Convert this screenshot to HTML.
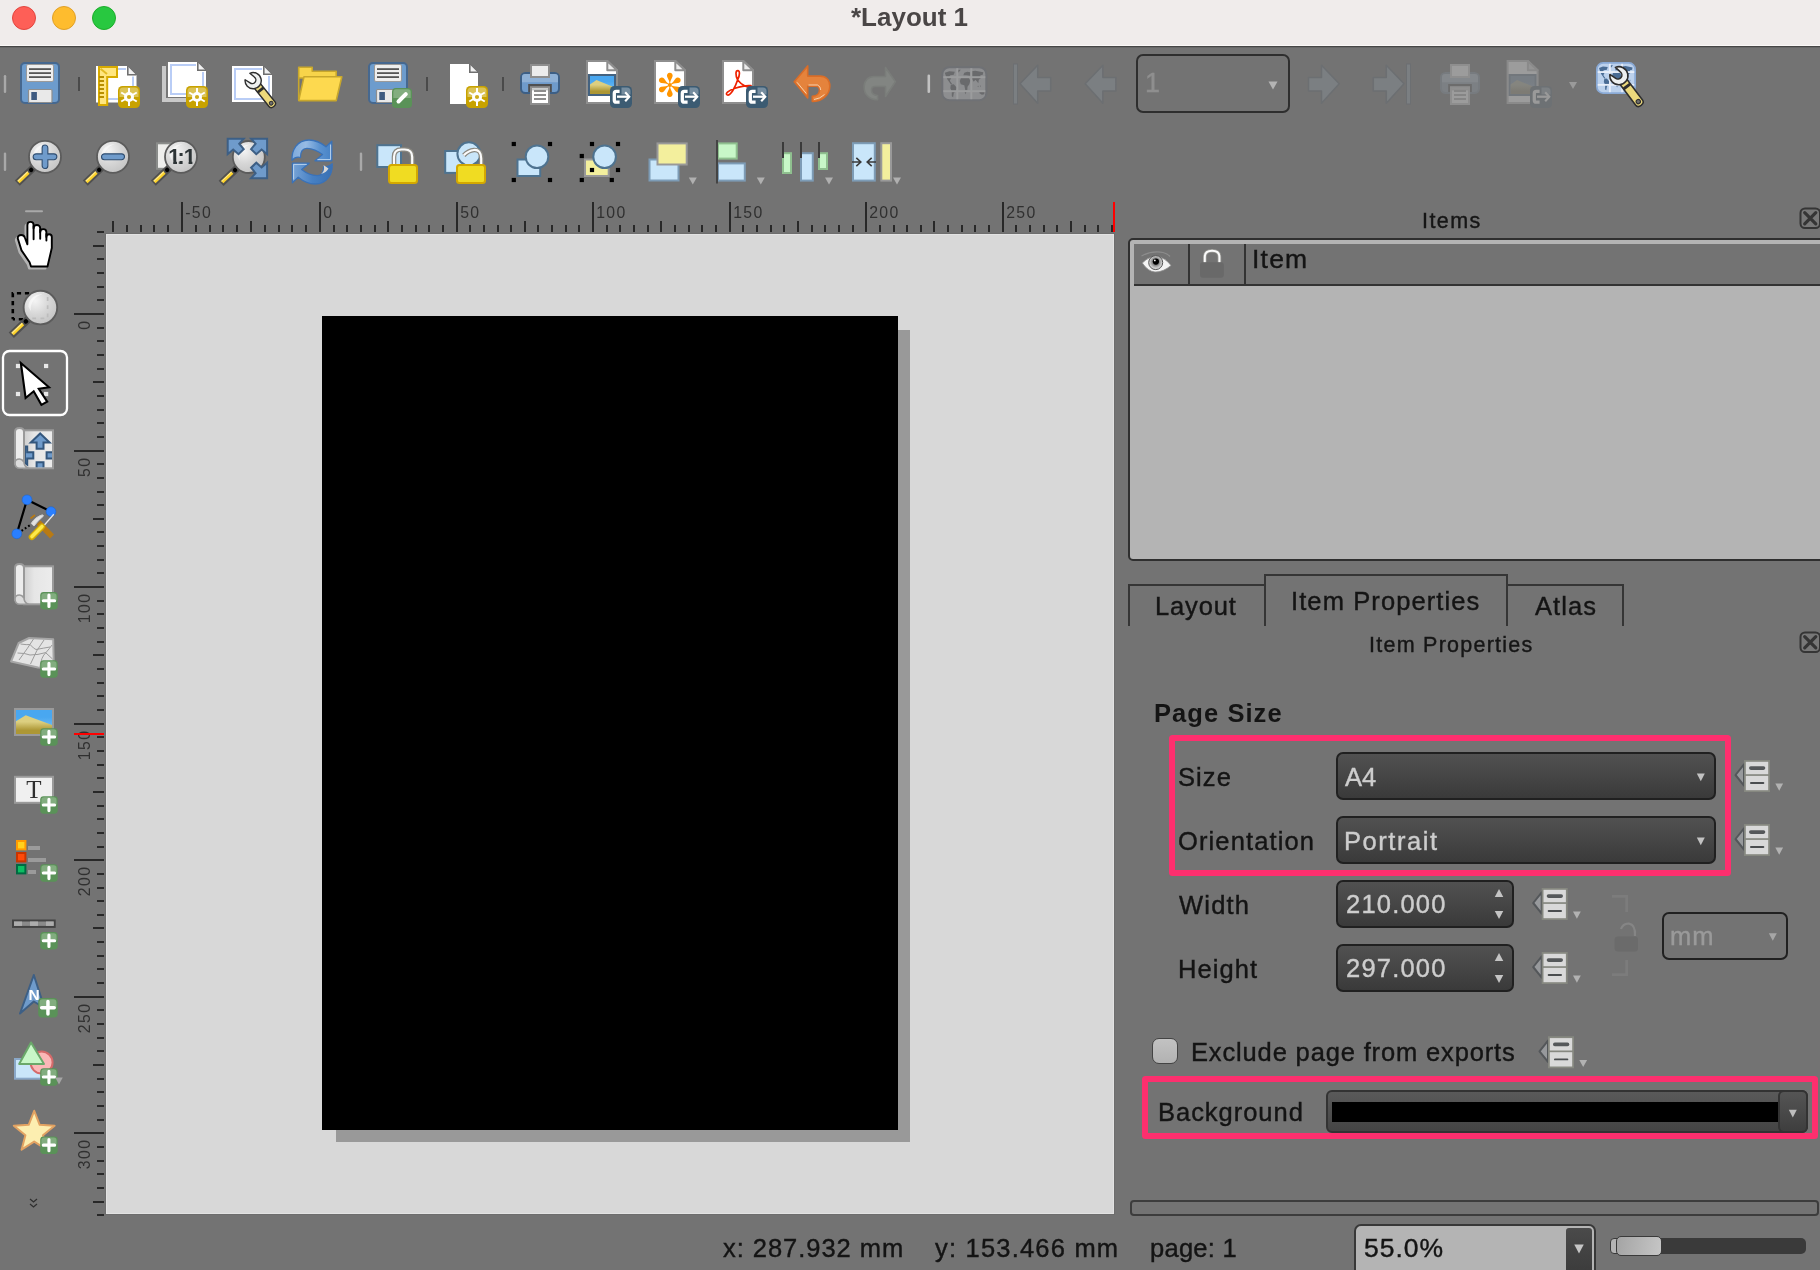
<!DOCTYPE html><html><head><meta charset="utf-8"><title>*Layout 1</title><style>
*{box-sizing:border-box;margin:0;padding:0}
html,body{width:1820px;height:1270px;overflow:hidden;background:#737373;font-family:"Liberation Sans",sans-serif;color:#1a1a1a}
.a{position:absolute}
.t{position:absolute;white-space:nowrap;line-height:1;will-change:transform;-webkit-text-stroke:.4px currentColor}
#title,#pgsize{-webkit-text-stroke:0}
.combo{position:absolute;border:2px solid #202020;border-radius:7px;background:linear-gradient(#515151,#3a3a3a)}
.lbl{font-size:25.5px;color:#141414}
.val{font-size:25.5px;color:#cdcdcd}
.tab{position:absolute;border:2px solid #353535;border-bottom:none;background:#737373}
.pink{position:absolute;border:6px solid #fd2f6e;border-radius:3.5px}
#ico{position:absolute;left:0;top:0;will-change:transform}

#items{letter-spacing:1.45px;margin-left:-2px}
#item{letter-spacing:1.2px;margin-left:-1px}
#tab1{letter-spacing:.84px;margin-left:-2px}
#tab2{letter-spacing:1.1px;margin-left:-2px}
#tab3{letter-spacing:1.1px}
#iptitle{letter-spacing:1.25px;margin-left:-2px}
#pgsize{letter-spacing:1.07px}
#lsize{letter-spacing:1.07px;margin-left:-1px}
#lori{letter-spacing:1.12px;margin-left:-1px}
#lwid{letter-spacing:1.2px}
#lhei{letter-spacing:1.06px;margin-left:-1px}
#vpor{letter-spacing:1.54px;margin-left:-1.5px}
#vw,#vh{letter-spacing:1.2px;margin-left:-1px}
#lexc{letter-spacing:.85px;margin-left:-.6px}
#lbg{letter-spacing:.97px}
#sx{letter-spacing:.96px;margin-left:1px}
#sy{letter-spacing:1.2px;margin-left:1.4px}
#sp{letter-spacing:.27px}
#szoom{letter-spacing:1px;margin-left:-1px}
#vmm{letter-spacing:1px}
#atl1{margin-left:-3px}
</style></head><body>
<div class="a" style="left:0;top:0;width:1820px;height:45px;background:#f0eceb"></div>
<div class="a" style="left:0;top:45px;width:1820px;height:1px;background:#fbf8f7"></div>
<div class="a" style="left:0;top:46px;width:1820px;height:1px;background:#464646"></div>
<div class="a" style="left:0;top:47px;width:1820px;height:1px;background:#676767"></div>
<div class="a" style="left:12px;top:6px;width:24px;height:24px;border-radius:50%;background:#fe5f57;border:1px solid #e2463f"></div>
<div class="a" style="left:52px;top:6px;width:24px;height:24px;border-radius:50%;background:#febc2e;border:1px solid #e0a028"></div>
<div class="a" style="left:92px;top:6px;width:24px;height:24px;border-radius:50%;background:#28c840;border:1px solid #1dad2b"></div>
<div class="t" id="title" style="left:851px;top:3.6px;font-size:26px;font-weight:bold;color:#4a4646">*Layout 1</div>
<div class="a" style="left:106px;top:234px;width:1008px;height:980px;background:#d8d8d8;border:1px solid #e2e2e2;box-shadow:0 0 0 1px #6d6d6d"></div>
<div class="a" style="left:336px;top:330px;width:574px;height:812px;background:#999"></div>
<div class="a" style="left:322px;top:316px;width:576px;height:814px;background:#000"></div>
<div class="a" style="left:1136px;top:54px;width:154px;height:59px;border:2px solid #2e2e2e;border-radius:7px"></div>
<div class="t" id="atl1" style="left:1148px;top:70px;font-size:27px;color:#8f8f8f">1</div>
<div class="t" id="items" style="left:1424px;top:211px;font-size:21.5px;color:#161616">Items</div>
<div class="a" style="left:1128px;top:238px;width:700px;height:323px;border:2px solid #2f2f2f;border-radius:5px;background:#b4b4b4"></div>
<div class="a" style="left:1134px;top:244px;width:690px;height:40px;background:#737373"></div>
<div class="a" style="left:1134px;top:284px;width:690px;height:2px;background:#333"></div>
<div class="a" style="left:1188px;top:244px;width:2px;height:41px;background:#333"></div>
<div class="a" style="left:1244px;top:244px;width:2px;height:41px;background:#333"></div>
<div class="t" id="item" style="left:1253px;top:246px;font-size:26.5px;color:#141414">Item</div>
<div class="tab" style="left:1128px;top:584px;width:138px;height:42px"></div>
<div class="tab" style="left:1506px;top:584px;width:118px;height:42px"></div>
<div class="tab" style="left:1264px;top:574px;width:244px;height:52px"></div>
<div class="t" id="tab1" style="left:1157px;top:594px;font-size:25.5px;color:#141414">Layout</div>
<div class="t" id="tab2" style="left:1293px;top:589px;font-size:25.5px;color:#141414">Item Properties</div>
<div class="t" id="tab3" style="left:1535px;top:594px;font-size:25.5px;color:#141414">Atlas</div>
<div class="t" id="iptitle" style="left:1371px;top:635px;font-size:21.5px;color:#161616">Item Properties</div>
<div class="t" id="pgsize" style="left:1154px;top:701px;font-size:25.5px;font-weight:bold;color:#141414">Page Size</div>
<div class="pink" style="left:1169px;top:735px;width:562px;height:141px"></div>
<div class="t lbl" id="lsize" style="left:1179px;top:765px">Size</div>
<div class="t lbl" id="lori" style="left:1179px;top:829px">Orientation</div>
<div class="t lbl" id="lwid" style="left:1179px;top:893px">Width</div>
<div class="t lbl" id="lhei" style="left:1179px;top:957px">Height</div>
<div class="combo" style="left:1336px;top:752px;width:380px;height:48px"></div>
<div class="combo" style="left:1336px;top:816px;width:380px;height:48px"></div>
<div class="combo" style="left:1336px;top:880px;width:178px;height:48px"></div>
<div class="combo" style="left:1336px;top:944px;width:178px;height:48px"></div>
<div class="t val" id="va4" style="left:1345px;top:765px">A4</div>
<div class="t val" id="vpor" style="left:1345px;top:829px">Portrait</div>
<div class="t val" id="vw" style="left:1347px;top:892px">210.000</div>
<div class="t val" id="vh" style="left:1347px;top:956px">297.000</div>
<div class="a" style="left:1662px;top:912px;width:126px;height:48px;border:2px solid #202020;border-radius:7px"></div>
<div class="t" id="vmm" style="left:1670px;top:924px;font-size:25.5px;color:#9a9a9a">mm</div>
<div class="a" style="left:1152px;top:1038px;width:26px;height:26px;border:1.5px solid #444;border-radius:7px;background:linear-gradient(#c2c2c2,#b2b2b2)"></div>
<div class="t lbl" id="lexc" style="left:1192px;top:1039.5px">Exclude page from exports</div>
<div class="pink" style="left:1142px;top:1076px;width:676px;height:63px"></div>
<div class="t lbl" id="lbg" style="left:1158px;top:1100px">Background</div>
<div class="a" style="left:1326px;top:1090px;width:482px;height:43px;border:2px solid #333;border-radius:6px;background:linear-gradient(#5a5a5a,#444)"></div>
<div class="a" style="left:1332px;top:1102px;width:446px;height:20px;background:#000"></div>
<div class="a" style="left:1778px;top:1090px;width:30px;height:43px;border:2px solid #333;border-radius:6px;background:linear-gradient(#555,#3e3e3e)"></div>
<div class="a" style="left:1130px;top:1200px;width:689px;height:16px;border:2px solid #3c3c3c;border-radius:4px"></div>
<div class="t" id="sx" style="left:722px;top:1236px;font-size:25.5px;color:#141414">x: 287.932 mm</div>
<div class="t" id="sy" style="left:934px;top:1236px;font-size:25.5px;color:#141414">y: 153.466 mm</div>
<div class="t" id="sp" style="left:1150px;top:1236px;font-size:25.5px;color:#141414">page: 1</div>
<div class="a" style="left:1354px;top:1224px;width:242px;height:60px;border:2px solid #383838;border-radius:7px;background:#b4b4b4"></div>
<div class="a" style="left:1566px;top:1228px;width:26px;height:50px;border-radius:3px 3px 0 0;background:linear-gradient(#4a4a4a,#3a3a3a)"></div>
<div class="t" id="szoom" style="left:1365px;top:1235px;font-size:26.5px;color:#141414">55.0%</div>
<div class="a" style="left:1611px;top:1238px;width:195px;height:16px;border-radius:5px;background:#3a3a3a"></div>
<div class="a" style="left:1610px;top:1238px;width:12px;height:16px;border:1.5px solid #3a3a3a;border-radius:4px;background:#b4b4b4"></div>
<div class="a" style="left:1616px;top:1236px;width:46px;height:20px;border:1.5px solid #3a3a3a;border-radius:5px;background:linear-gradient(100deg,#a4a4a4,#c6c6c6)"></div>
<svg id="ico" width="1820" height="1270" viewBox="0 0 1820 1270" font-family="Liberation Sans, sans-serif"><rect x="112" y="221" width="2" height="11" fill="#282828"/>
<rect x="126" y="225" width="2" height="7" fill="#282828"/>
<rect x="140" y="225" width="2" height="7" fill="#282828"/>
<rect x="153" y="225" width="2" height="7" fill="#282828"/>
<rect x="167" y="225" width="2" height="7" fill="#282828"/>
<rect x="181" y="202" width="2" height="30" fill="#282828"/>
<text x="185.2" y="217.8" font-size="15.8" letter-spacing="1.4" fill="#303030">-50</text>
<rect x="195" y="225" width="2" height="7" fill="#282828"/>
<rect x="209" y="225" width="2" height="7" fill="#282828"/>
<rect x="222" y="225" width="2" height="7" fill="#282828"/>
<rect x="236" y="225" width="2" height="7" fill="#282828"/>
<rect x="250" y="221" width="2" height="11" fill="#282828"/>
<rect x="264" y="225" width="2" height="7" fill="#282828"/>
<rect x="278" y="225" width="2" height="7" fill="#282828"/>
<rect x="291" y="225" width="2" height="7" fill="#282828"/>
<rect x="305" y="225" width="2" height="7" fill="#282828"/>
<rect x="319" y="202" width="2" height="30" fill="#282828"/>
<text x="323.2" y="217.8" font-size="15.8" letter-spacing="1.4" fill="#303030">0</text>
<rect x="333" y="225" width="2" height="7" fill="#282828"/>
<rect x="346" y="225" width="2" height="7" fill="#282828"/>
<rect x="360" y="225" width="2" height="7" fill="#282828"/>
<rect x="374" y="225" width="2" height="7" fill="#282828"/>
<rect x="387" y="221" width="2" height="11" fill="#282828"/>
<rect x="401" y="225" width="2" height="7" fill="#282828"/>
<rect x="415" y="225" width="2" height="7" fill="#282828"/>
<rect x="428" y="225" width="2" height="7" fill="#282828"/>
<rect x="442" y="225" width="2" height="7" fill="#282828"/>
<rect x="456" y="202" width="2" height="30" fill="#282828"/>
<text x="460.2" y="217.8" font-size="15.8" letter-spacing="1.4" fill="#303030">50</text>
<rect x="469" y="225" width="2" height="7" fill="#282828"/>
<rect x="483" y="225" width="2" height="7" fill="#282828"/>
<rect x="497" y="225" width="2" height="7" fill="#282828"/>
<rect x="510" y="225" width="2" height="7" fill="#282828"/>
<rect x="524" y="221" width="2" height="11" fill="#282828"/>
<rect x="537" y="225" width="2" height="7" fill="#282828"/>
<rect x="551" y="225" width="2" height="7" fill="#282828"/>
<rect x="565" y="225" width="2" height="7" fill="#282828"/>
<rect x="578" y="225" width="2" height="7" fill="#282828"/>
<rect x="592" y="202" width="2" height="30" fill="#282828"/>
<text x="596.2" y="217.8" font-size="15.8" letter-spacing="1.4" fill="#303030">100</text>
<rect x="606" y="225" width="2" height="7" fill="#282828"/>
<rect x="619" y="225" width="2" height="7" fill="#282828"/>
<rect x="633" y="225" width="2" height="7" fill="#282828"/>
<rect x="647" y="225" width="2" height="7" fill="#282828"/>
<rect x="660" y="221" width="2" height="11" fill="#282828"/>
<rect x="674" y="225" width="2" height="7" fill="#282828"/>
<rect x="688" y="225" width="2" height="7" fill="#282828"/>
<rect x="701" y="225" width="2" height="7" fill="#282828"/>
<rect x="715" y="225" width="2" height="7" fill="#282828"/>
<rect x="729" y="202" width="2" height="30" fill="#282828"/>
<text x="733.2" y="217.8" font-size="15.8" letter-spacing="1.4" fill="#303030">150</text>
<rect x="742" y="225" width="2" height="7" fill="#282828"/>
<rect x="756" y="225" width="2" height="7" fill="#282828"/>
<rect x="770" y="225" width="2" height="7" fill="#282828"/>
<rect x="783" y="225" width="2" height="7" fill="#282828"/>
<rect x="797" y="221" width="2" height="11" fill="#282828"/>
<rect x="811" y="225" width="2" height="7" fill="#282828"/>
<rect x="824" y="225" width="2" height="7" fill="#282828"/>
<rect x="838" y="225" width="2" height="7" fill="#282828"/>
<rect x="852" y="225" width="2" height="7" fill="#282828"/>
<rect x="865" y="202" width="2" height="30" fill="#282828"/>
<text x="869.2" y="217.8" font-size="15.8" letter-spacing="1.4" fill="#303030">200</text>
<rect x="879" y="225" width="2" height="7" fill="#282828"/>
<rect x="893" y="225" width="2" height="7" fill="#282828"/>
<rect x="906" y="225" width="2" height="7" fill="#282828"/>
<rect x="920" y="225" width="2" height="7" fill="#282828"/>
<rect x="933" y="221" width="2" height="11" fill="#282828"/>
<rect x="947" y="225" width="2" height="7" fill="#282828"/>
<rect x="961" y="225" width="2" height="7" fill="#282828"/>
<rect x="974" y="225" width="2" height="7" fill="#282828"/>
<rect x="988" y="225" width="2" height="7" fill="#282828"/>
<rect x="1002" y="202" width="2" height="30" fill="#282828"/>
<text x="1006.2" y="217.8" font-size="15.8" letter-spacing="1.4" fill="#303030">250</text>
<rect x="1015" y="225" width="2" height="7" fill="#282828"/>
<rect x="1029" y="225" width="2" height="7" fill="#282828"/>
<rect x="1043" y="225" width="2" height="7" fill="#282828"/>
<rect x="1056" y="225" width="2" height="7" fill="#282828"/>
<rect x="1070" y="221" width="2" height="11" fill="#282828"/>
<rect x="1084" y="225" width="2" height="7" fill="#282828"/>
<rect x="1097" y="225" width="2" height="7" fill="#282828"/>
<rect x="1111" y="225" width="2" height="7" fill="#282828"/>
<rect x="1113" y="202" width="2" height="30" fill="#f00"/>
<rect x="97" y="231" width="7" height="2" fill="#282828"/>
<rect x="93" y="245" width="11" height="2" fill="#282828"/>
<rect x="97" y="258" width="7" height="2" fill="#282828"/>
<rect x="97" y="272" width="7" height="2" fill="#282828"/>
<rect x="97" y="286" width="7" height="2" fill="#282828"/>
<rect x="97" y="299" width="7" height="2" fill="#282828"/>
<rect x="74" y="313" width="30" height="2" fill="#282828"/>
<text transform="translate(90.3,319.6) rotate(-90)" text-anchor="end" font-size="15.8" letter-spacing="1.4" fill="#303030">0</text>
<rect x="97" y="327" width="7" height="2" fill="#282828"/>
<rect x="97" y="340" width="7" height="2" fill="#282828"/>
<rect x="97" y="354" width="7" height="2" fill="#282828"/>
<rect x="97" y="368" width="7" height="2" fill="#282828"/>
<rect x="93" y="381" width="11" height="2" fill="#282828"/>
<rect x="97" y="395" width="7" height="2" fill="#282828"/>
<rect x="97" y="409" width="7" height="2" fill="#282828"/>
<rect x="97" y="422" width="7" height="2" fill="#282828"/>
<rect x="97" y="436" width="7" height="2" fill="#282828"/>
<rect x="74" y="450" width="30" height="2" fill="#282828"/>
<text transform="translate(90.3,456.6) rotate(-90)" text-anchor="end" font-size="15.8" letter-spacing="1.4" fill="#303030">50</text>
<rect x="97" y="463" width="7" height="2" fill="#282828"/>
<rect x="97" y="477" width="7" height="2" fill="#282828"/>
<rect x="97" y="491" width="7" height="2" fill="#282828"/>
<rect x="97" y="504" width="7" height="2" fill="#282828"/>
<rect x="93" y="518" width="11" height="2" fill="#282828"/>
<rect x="97" y="531" width="7" height="2" fill="#282828"/>
<rect x="97" y="545" width="7" height="2" fill="#282828"/>
<rect x="97" y="559" width="7" height="2" fill="#282828"/>
<rect x="97" y="572" width="7" height="2" fill="#282828"/>
<rect x="74" y="586" width="30" height="2" fill="#282828"/>
<text transform="translate(90.3,592.6) rotate(-90)" text-anchor="end" font-size="15.8" letter-spacing="1.4" fill="#303030">100</text>
<rect x="97" y="600" width="7" height="2" fill="#282828"/>
<rect x="97" y="613" width="7" height="2" fill="#282828"/>
<rect x="97" y="627" width="7" height="2" fill="#282828"/>
<rect x="97" y="641" width="7" height="2" fill="#282828"/>
<rect x="93" y="654" width="11" height="2" fill="#282828"/>
<rect x="97" y="668" width="7" height="2" fill="#282828"/>
<rect x="97" y="682" width="7" height="2" fill="#282828"/>
<rect x="97" y="695" width="7" height="2" fill="#282828"/>
<rect x="97" y="709" width="7" height="2" fill="#282828"/>
<rect x="74" y="723" width="30" height="2" fill="#282828"/>
<text transform="translate(90.3,729.6) rotate(-90)" text-anchor="end" font-size="15.8" letter-spacing="1.4" fill="#303030">150</text>
<rect x="97" y="736" width="7" height="2" fill="#282828"/>
<rect x="97" y="750" width="7" height="2" fill="#282828"/>
<rect x="97" y="764" width="7" height="2" fill="#282828"/>
<rect x="97" y="777" width="7" height="2" fill="#282828"/>
<rect x="93" y="791" width="11" height="2" fill="#282828"/>
<rect x="97" y="805" width="7" height="2" fill="#282828"/>
<rect x="97" y="818" width="7" height="2" fill="#282828"/>
<rect x="97" y="832" width="7" height="2" fill="#282828"/>
<rect x="97" y="846" width="7" height="2" fill="#282828"/>
<rect x="74" y="859" width="30" height="2" fill="#282828"/>
<text transform="translate(90.3,865.6) rotate(-90)" text-anchor="end" font-size="15.8" letter-spacing="1.4" fill="#303030">200</text>
<rect x="97" y="873" width="7" height="2" fill="#282828"/>
<rect x="97" y="887" width="7" height="2" fill="#282828"/>
<rect x="97" y="900" width="7" height="2" fill="#282828"/>
<rect x="97" y="914" width="7" height="2" fill="#282828"/>
<rect x="93" y="927" width="11" height="2" fill="#282828"/>
<rect x="97" y="941" width="7" height="2" fill="#282828"/>
<rect x="97" y="955" width="7" height="2" fill="#282828"/>
<rect x="97" y="968" width="7" height="2" fill="#282828"/>
<rect x="97" y="982" width="7" height="2" fill="#282828"/>
<rect x="74" y="996" width="30" height="2" fill="#282828"/>
<text transform="translate(90.3,1002.6) rotate(-90)" text-anchor="end" font-size="15.8" letter-spacing="1.4" fill="#303030">250</text>
<rect x="97" y="1009" width="7" height="2" fill="#282828"/>
<rect x="97" y="1023" width="7" height="2" fill="#282828"/>
<rect x="97" y="1037" width="7" height="2" fill="#282828"/>
<rect x="97" y="1050" width="7" height="2" fill="#282828"/>
<rect x="93" y="1064" width="11" height="2" fill="#282828"/>
<rect x="97" y="1078" width="7" height="2" fill="#282828"/>
<rect x="97" y="1091" width="7" height="2" fill="#282828"/>
<rect x="97" y="1105" width="7" height="2" fill="#282828"/>
<rect x="97" y="1119" width="7" height="2" fill="#282828"/>
<rect x="74" y="1132" width="30" height="2" fill="#282828"/>
<text transform="translate(90.3,1138.6) rotate(-90)" text-anchor="end" font-size="15.8" letter-spacing="1.4" fill="#303030">300</text>
<rect x="97" y="1146" width="7" height="2" fill="#282828"/>
<rect x="97" y="1160" width="7" height="2" fill="#282828"/>
<rect x="97" y="1173" width="7" height="2" fill="#282828"/>
<rect x="97" y="1187" width="7" height="2" fill="#282828"/>
<rect x="93" y="1201" width="11" height="2" fill="#282828"/>
<rect x="97" y="1214" width="7" height="2" fill="#282828"/>
<rect x="74" y="733" width="30" height="2" fill="#f00"/>
<rect x="3.8" y="75" width="2.4" height="18" rx="1.2" fill="#a9a9a9"/>
<g transform="translate(20,62)" ><rect x="1" y="1" width="38" height="40" rx="4" fill="#6d9ccd" stroke="#46688f" stroke-width="2"/><rect x="6.5" y="2.5" width="27" height="17" rx="1.5" fill="#eeeeee" stroke="#9a9a9a" stroke-width="1"/><rect x="9" y="6.2" width="22" height="1.8" fill="#555"/><rect x="9" y="10.2" width="22" height="1.8" fill="#555"/><rect x="9" y="14.2" width="22" height="1.8" fill="#555"/><rect x="8.5" y="27.5" width="23.5" height="13" rx="1" fill="#e9e9e9" stroke="#8e8e8e" stroke-width="1.2"/><rect x="11.3" y="30" width="5.6" height="8" fill="#3d5a80"/></g>
<rect x="78.0" y="77" width="2" height="14" fill="#4a4a4a"/>
<g transform="translate(96,66)" ><path d="M0,0 H31.0 L40.5,9.5 V36.5 H0 Z" fill="#fff" /><path d="M31.0,0 V9.5 H40.5 Z" fill="#f1f1f1"/><path d="M31.8,0 V8.7 H40.5" fill="none" stroke="#6f6f6f" stroke-width="1.6"/></g>
<path d="M117,69 H126 M133,76.5 V99 H107" fill="none" stroke="#b9cdf6" stroke-width="2"/>
<path d="M99,67 H117 V77 H107.2 V105 H99 Z" fill="#ffe680" stroke="#d8ab00" stroke-width="2" stroke-linejoin="miter"/>
<rect x="99" y="76" width="5" height="2" fill="#b88f00"/>
<rect x="99" y="80" width="5" height="2" fill="#b88f00"/>
<rect x="99" y="84" width="5" height="2" fill="#b88f00"/>
<rect x="99" y="88" width="5" height="2" fill="#b88f00"/>
<rect x="99" y="92" width="5" height="2" fill="#b88f00"/>
<rect x="99" y="96" width="5" height="2" fill="#b88f00"/>
<path d="M100.5,68.8 L107,74" stroke="#e3bb25" stroke-width="2"/>
<g transform="translate(118,86)" ><rect x="0" y="0" width="22" height="22" rx="4.5" fill="#c8a200"/><path d="M1.5,11 V5 Q1.5,1.5 5,1.5 H17 Q20.5,1.5 20.5,5 V11 Z" fill="#dcc355"/><rect x="10" y="2" width="2" height="9.5" fill="#fff" transform="rotate(0 11 11)"/><rect x="10" y="2" width="2" height="9.5" fill="#fff" transform="rotate(60 11 11)"/><rect x="10" y="2" width="2" height="9.5" fill="#fff" transform="rotate(120 11 11)"/><rect x="10" y="2" width="2" height="9.5" fill="#fff" transform="rotate(180 11 11)"/><rect x="10" y="2" width="2" height="9.5" fill="#fff" transform="rotate(240 11 11)"/><rect x="10" y="2" width="2" height="9.5" fill="#fff" transform="rotate(300 11 11)"/><circle cx="11" cy="11" r="5" fill="#fff"/><circle cx="11" cy="11" r="2.1" fill="#cfac1e"/></g>
<rect x="162" y="66" width="36" height="36" fill="#c9c9c9"/>
<rect x="166" y="62" width="4" height="36" fill="#777"/><rect x="166" y="95" width="32" height="3" fill="#777"/>
<g transform="translate(168,62)" ><path d="M0,0 H29 L38,9 V35 H0 Z" fill="#fff" /><path d="M29,0 V9 H38 Z" fill="#f1f1f1"/><path d="M29.8,0 V8.2 H38" fill="none" stroke="#6f6f6f" stroke-width="1.6"/></g>
<path d="M196,65 H171 V94 H203 V72" fill="none" stroke="#b9cdf6" stroke-width="2"/>
<g transform="translate(186,86)" ><rect x="0" y="0" width="22" height="22" rx="4.5" fill="#c8a200"/><path d="M1.5,11 V5 Q1.5,1.5 5,1.5 H17 Q20.5,1.5 20.5,5 V11 Z" fill="#dcc355"/><rect x="10" y="2" width="2" height="9.5" fill="#fff" transform="rotate(0 11 11)"/><rect x="10" y="2" width="2" height="9.5" fill="#fff" transform="rotate(60 11 11)"/><rect x="10" y="2" width="2" height="9.5" fill="#fff" transform="rotate(120 11 11)"/><rect x="10" y="2" width="2" height="9.5" fill="#fff" transform="rotate(180 11 11)"/><rect x="10" y="2" width="2" height="9.5" fill="#fff" transform="rotate(240 11 11)"/><rect x="10" y="2" width="2" height="9.5" fill="#fff" transform="rotate(300 11 11)"/><circle cx="11" cy="11" r="5" fill="#fff"/><circle cx="11" cy="11" r="2.1" fill="#cfac1e"/></g>
<g transform="translate(232,66)" ><path d="M0,0 H31 L40,9 V36 H0 Z" fill="#fff" /><path d="M31,0 V9 H40 Z" fill="#f1f1f1"/><path d="M31.8,0 V8.2 H40" fill="none" stroke="#6f6f6f" stroke-width="1.6"/></g>
<path d="M262,69 H235 V99 H269 V76" fill="none" stroke="#b9cdf6" stroke-width="2"/>
<g transform="translate(253.2,80.7) rotate(-38.7) scale(1)"><path d="M-3.8,6 V30 Q-3.8,33 0,33 Q3.8,33 3.8,30 V6 Z" fill="#ecd97c" stroke="#2e2e2e" stroke-width="1.4"/><rect x="-3.8" y="10.6" width="7.6" height="2.6" fill="#2e2e2e"/><circle cx="0" cy="28.8" r="1.9" fill="#6e6e6e" stroke="#2e2e2e" stroke-width="1"/><path transform="rotate(-15)" d="M4.0,-7.1 A8.1,8.1 0 1 1 -4.0,-7.1 L-3.6,-1.2 A3.6,3.6 0 0 0 3.6,-1.2 Z" fill="#eef0f0" stroke="#2e2e2e" stroke-width="1.4" stroke-linejoin="round"/></g>
<path d="M298.7,100 V67.2 H312.2 V71.3 H336.2 V78 H298.7 Z" fill="#f7d44a" stroke="#c8a72c" stroke-width="1.6" stroke-linejoin="round"/>
<path d="M298.7,100.6 L304,76.7 H341.8 L336.2,100.6 Z" fill="#fdd94f" stroke="#c8a72c" stroke-width="1.6" stroke-linejoin="round"/>
<g transform="translate(368,62)" ><rect x="1" y="1" width="38" height="40" rx="4" fill="#6d9ccd" stroke="#46688f" stroke-width="2"/><rect x="6.5" y="2.5" width="27" height="17" rx="1.5" fill="#eeeeee" stroke="#9a9a9a" stroke-width="1"/><rect x="9" y="6.2" width="22" height="1.8" fill="#555"/><rect x="9" y="10.2" width="22" height="1.8" fill="#555"/><rect x="9" y="14.2" width="22" height="1.8" fill="#555"/><rect x="8.5" y="27.5" width="23.5" height="13" rx="1" fill="#e9e9e9" stroke="#8e8e8e" stroke-width="1.2"/><rect x="11.3" y="30" width="5.6" height="8" fill="#3d5a80"/></g>
<rect x="392" y="88" width="20" height="20" rx="4" fill="#5a9258"/><path d="M393.3,98 V92 Q393.3,89.3 396,89.3 H408 Q410.7,89.3 410.7,92 V98 Z" fill="#82ad7f"/>
<path d="M398.5,101.5 L405.8,94.1" stroke="#fff" stroke-width="4" stroke-linecap="round"/>
<rect x="426.0" y="77" width="2" height="14" fill="#4a4a4a"/>
<g transform="translate(450,64)" ><path d="M0,0 H19 L28,9 V40 H0 Z" fill="#fff" /><path d="M19,0 V9 H28 Z" fill="#f1f1f1"/><path d="M19.8,0 V8.2 H28" fill="none" stroke="#6f6f6f" stroke-width="1.6"/></g>
<g transform="translate(466,86)" ><rect x="0" y="0" width="22" height="22" rx="4.5" fill="#c8a200"/><path d="M1.5,11 V5 Q1.5,1.5 5,1.5 H17 Q20.5,1.5 20.5,5 V11 Z" fill="#dcc355"/><rect x="10" y="2" width="2" height="9.5" fill="#fff" transform="rotate(0 11 11)"/><rect x="10" y="2" width="2" height="9.5" fill="#fff" transform="rotate(60 11 11)"/><rect x="10" y="2" width="2" height="9.5" fill="#fff" transform="rotate(120 11 11)"/><rect x="10" y="2" width="2" height="9.5" fill="#fff" transform="rotate(180 11 11)"/><rect x="10" y="2" width="2" height="9.5" fill="#fff" transform="rotate(240 11 11)"/><rect x="10" y="2" width="2" height="9.5" fill="#fff" transform="rotate(300 11 11)"/><circle cx="11" cy="11" r="5" fill="#fff"/><circle cx="11" cy="11" r="2.1" fill="#cfac1e"/></g>
<rect x="502.0" y="77" width="2" height="14" fill="#4a4a4a"/>
<g transform="translate(520,64)" ><rect x="1" y="9" width="38" height="20" rx="4.5" fill="#6f9bcb" stroke="#3d5f85" stroke-width="2"/><path d="M2,18.3 V13 Q2,10 5,10 H35 Q38,10 38,13 V18.3 Z" fill="#8fb1d6"/><rect x="11" y="1" width="18" height="12" fill="#ececec" stroke="#8e8e8e" stroke-width="2"/><rect x="8.2" y="20" width="23.6" height="8" fill="#4f4f4f"/><rect x="11" y="23.2" width="18" height="16.8" fill="#fff" stroke="#8e8e8e" stroke-width="2"/><rect x="12" y="24.2" width="16" height="2.2" fill="#c4c6c6"/><rect x="14" y="26" width="12" height="2" fill="#8e8e8e"/><rect x="14" y="30" width="12" height="2" fill="#8e8e8e"/><rect x="14" y="34" width="12" height="2" fill="#8e8e8e"/></g>
<g transform="translate(586,60)" ><path d="M1,1 H21.3 L31,10.2 V43 H1 Z" fill="#fff" stroke="#8e8e8e" stroke-width="2" stroke-linejoin="miter"/><path d="M21.3,1 V10.2 H31 Z" fill="#ececec" stroke="#8e8e8e" stroke-width="2" stroke-linejoin="round"/></g>
<g transform="translate(588,74)" ><defs><linearGradient id="p588_74a" x1="0" y1="0" x2="0" y2="1"><stop offset="0.3" stop-color="#49a7f0"/><stop offset="1" stop-color="#86c9f8"/></linearGradient><linearGradient id="p588_74b" x1="0" y1="0" x2="0" y2="1"><stop offset="0.35" stop-color="#dccf80"/><stop offset="0.8" stop-color="#ad9735"/></linearGradient></defs><rect x="0" y="0" width="28" height="22" fill="#44627f"/><rect x="2" y="2" width="24" height="18" fill="url(#p588_74a)"/><path d="M2,10.459999999999999 L8.48,5.96 L26,13.16 V20 H2 Z" fill="url(#p588_74b)"/></g>
<g transform="translate(610,86)" ><rect x="0" y="0" width="22" height="22" rx="4.5" fill="#3c5b72"/><path d="M11.5,8.5 V1.5 H17 Q20.5,1.5 20.5,5 V8.5 Z" fill="#768d9f"/><path d="M9.6,5.4 H6.3 Q4.3,5.4 4.3,7.4 V14.2 Q4.3,16.2 6.3,16.2 H9.6" fill="none" stroke="#fff" stroke-width="3.3" stroke-linecap="butt" stroke-linejoin="round"/><path d="M7,10.7 H18.5" stroke="#fff" stroke-width="2.3" fill="none"/><path d="M15.2,6.2 L19.3,10.7 L15.2,15.3" stroke="#fff" stroke-width="2.1" fill="none"/></g>
<g transform="translate(654,60)" ><path d="M1,1 H21.3 L31,10.2 V43 H1 Z" fill="#fff" stroke="#8e8e8e" stroke-width="2" stroke-linejoin="miter"/><path d="M21.3,1 V10.2 H31 Z" fill="#ececec" stroke="#8e8e8e" stroke-width="2" stroke-linejoin="round"/></g>
<g transform="translate(669.8,84.9)" ><path transform="rotate(0)" d="M0,0 Q-0.5,-4.6 -2.65,-8.2 A2.85,2.85 0 1 1 2.65,-8.2 Q0.5,-4.6 0,0 Z" fill="#ff9500"/><path transform="rotate(60)" d="M0,0 Q-0.5,-4.6 -2.65,-8.2 A2.85,2.85 0 1 1 2.65,-8.2 Q0.5,-4.6 0,0 Z" fill="#ff9500"/><path transform="rotate(120)" d="M0,0 Q-0.5,-4.6 -2.65,-8.2 A2.85,2.85 0 1 1 2.65,-8.2 Q0.5,-4.6 0,0 Z" fill="#ff9500"/><path transform="rotate(180)" d="M0,0 Q-0.5,-4.6 -2.65,-8.2 A2.85,2.85 0 1 1 2.65,-8.2 Q0.5,-4.6 0,0 Z" fill="#ff9500"/><path transform="rotate(240)" d="M0,0 Q-0.5,-4.6 -2.65,-8.2 A2.85,2.85 0 1 1 2.65,-8.2 Q0.5,-4.6 0,0 Z" fill="#ff9500"/><path transform="rotate(300)" d="M0,0 Q-0.5,-4.6 -2.65,-8.2 A2.85,2.85 0 1 1 2.65,-8.2 Q0.5,-4.6 0,0 Z" fill="#ff9500"/><circle r="2" fill="#ff9500"/></g>
<g transform="translate(678,86)" ><rect x="0" y="0" width="22" height="22" rx="4.5" fill="#3c5b72"/><path d="M11.5,8.5 V1.5 H17 Q20.5,1.5 20.5,5 V8.5 Z" fill="#768d9f"/><path d="M9.6,5.4 H6.3 Q4.3,5.4 4.3,7.4 V14.2 Q4.3,16.2 6.3,16.2 H9.6" fill="none" stroke="#fff" stroke-width="3.3" stroke-linecap="butt" stroke-linejoin="round"/><path d="M7,10.7 H18.5" stroke="#fff" stroke-width="2.3" fill="none"/><path d="M15.2,6.2 L19.3,10.7 L15.2,15.3" stroke="#fff" stroke-width="2.1" fill="none"/></g>
<g transform="translate(722,60)" ><path d="M1,1 H21.3 L31,10.2 V43 H1 Z" fill="#fff" stroke="#8e8e8e" stroke-width="2" stroke-linejoin="miter"/><path d="M21.3,1 V10.2 H31 Z" fill="#ececec" stroke="#8e8e8e" stroke-width="2" stroke-linejoin="round"/></g>
<path d="M737.6,80 C735.2,74.5 735.6,70.6 737.8,70.6 C740,70.6 740,75 737.6,80 C735,88 730.5,95.5 727.5,95 C724.5,94 728,90.8 735,88.3 C741,86.3 747,85.2 751,85.7 C748.5,88.5 742,85.5 737.6,80 Z" fill="none" stroke="#ee2200" stroke-width="1.7" stroke-linejoin="round"/>
<g transform="translate(746,86)" ><rect x="0" y="0" width="22" height="22" rx="4.5" fill="#3c5b72"/><path d="M11.5,8.5 V1.5 H17 Q20.5,1.5 20.5,5 V8.5 Z" fill="#768d9f"/><path d="M9.6,5.4 H6.3 Q4.3,5.4 4.3,7.4 V14.2 Q4.3,16.2 6.3,16.2 H9.6" fill="none" stroke="#fff" stroke-width="3.3" stroke-linecap="butt" stroke-linejoin="round"/><path d="M7,10.7 H18.5" stroke="#fff" stroke-width="2.3" fill="none"/><path d="M15.2,6.2 L19.3,10.7 L15.2,15.3" stroke="#fff" stroke-width="2.1" fill="none"/></g>
<path d="M794.2,81.7 L807.7,65.9 V76.1 H820 C826,76.1 829.8,80 829.8,86 C829.8,95 822,101.5 812.3,101.5 V96.2 C816.5,96 819.5,93.5 819.5,90 C819.5,87.5 818.5,86.3 816,86.3 H807.7 V97.9 Z" fill="#e5833c" stroke="#d96d28" stroke-width="1.6" stroke-linejoin="round"/>
<path d="M797,82.3 L806.3,93.5 M808.5,85 H817.5 Q820.7,86.3 820.7,90 M814,99.5 Q820,98.8 824.5,94.5" fill="none" stroke="#fbd9b8" stroke-width="1" opacity="0.9"/>
<path d="M895.4,81.7 L885.5,67.5 V76.5 H874 C868,76.5 864.1,81 864.1,87 C864.1,95 870,99.8 877.6,99.8 V95.5 C874,95.2 871.5,93 871.5,90 C871.5,87.8 872.5,86.5 875,86.5 H885.5 V96.5 Z" fill="#828582" stroke="#7a7d7a" stroke-width="1.6" stroke-linejoin="round"/>
<rect x="927.5" y="74.5" width="2.6" height="18.5" rx="1.3" fill="#c2c2c2"/>
<g transform="translate(941.3,66.2) scale(1,1)"><rect x="1" y="1" width="44" height="33" rx="7" fill="#8d8e90" stroke="#6f7175" stroke-width="2"/><g fill="#696a6c"><path d="M3.5,6.5 L8,5 L13.5,5.5 L12.5,8.5 L9,9 L7.5,11 L10,11.5 L8.5,14.5 L11,18 L9.5,18 L6,13 L4.5,9.5 Z"/><path d="M9.5,18.5 L12.5,18 L15.5,21.5 L14.5,24.5 L12.5,27 L11.8,31 L10.5,30 L10.5,25 L9,22 Z"/><path d="M16,3.5 H19.5 L17,6.5 Z"/><path d="M22,9 L23,6.5 L26,5.5 L29,6 V9.5 L25,9 Z"/><path d="M19.5,12 L23,10.5 L27.5,11.5 L29,14.5 L28,18 L26.2,20.5 L26,24 L24,24 L23,19 L19.5,18 L18.5,15 Z"/><path d="M30,5 L34,4.5 L42,6 L41.5,8.5 L39,9 L39.5,12 L37.5,13.5 L37,17 L35.5,15 L34,13.5 L32.5,15.5 L30.5,12.5 Z"/><path d="M37.5,26.5 L40,25.2 L43.2,25.5 L43,28 L40.5,28.5 L39,27.6 Z"/><path d="M23.3,25.8 L25.2,25.5 L24.2,28 Z"/><path d="M36,20 L37,19.5 L37.5,21 Z M38.5,19.6 L39.5,19.4 L39.3,21 Z"/></g><g fill="#9b9c9d"><rect x="15" y="2" width="2" height="31"/><rect x="29" y="2" width="2" height="31"/><rect x="2" y="10" width="42" height="2"/><rect x="2" y="24" width="42" height="2"/></g></g>
<rect x="1013.5" y="64" width="4" height="40" fill="#7b7f82" stroke="#6c6f72" stroke-width="1"/>
<g transform="translate(1019.2,64.3)"><path d="M0.8,19.5 L18.5,1 V13.2 H31.5 V26.8 H18.5 V39 Z" fill="#7b7f82" stroke="#6c6f72" stroke-width="1.5" stroke-linejoin="round"/></g>
<g transform="translate(1084.4,64.3)"><path d="M0.8,19.5 L18.5,1 V13.2 H31.5 V26.8 H18.5 V39 Z" fill="#7b7f82" stroke="#6c6f72" stroke-width="1.5" stroke-linejoin="round"/></g>
<path d="M1268.5,81.5 h9 l-4.5,8 z" fill="#b4b4b4"/>
<g transform="translate(1340,64.3) scale(-1,1)"><path d="M0.8,19.5 L18.5,1 V13.2 H31.5 V26.8 H18.5 V39 Z" fill="#7b7f82" stroke="#6c6f72" stroke-width="1.5" stroke-linejoin="round"/></g>
<g transform="translate(1404.8,64.3) scale(-1,1)"><path d="M0.8,19.5 L18.5,1 V13.2 H31.5 V26.8 H18.5 V39 Z" fill="#7b7f82" stroke="#6c6f72" stroke-width="1.5" stroke-linejoin="round"/></g>
<rect x="1406.5" y="64" width="4" height="40" fill="#7b7f82" stroke="#6c6f72" stroke-width="1"/>
<g transform="translate(1440,64)" ><rect x="1" y="9" width="38" height="20" rx="4.5" fill="#7c8084" stroke="#777b7f" stroke-width="2"/><path d="M2,18.3 V13 Q2,10 5,10 H35 Q38,10 38,13 V18.3 Z" fill="#84888c"/><rect x="11" y="1" width="18" height="12" fill="#9c9c9c" stroke="#8e8e8e" stroke-width="2"/><rect x="8.2" y="20" width="23.6" height="8" fill="#6c6c6c"/><rect x="11" y="23.2" width="18" height="16.8" fill="#9c9c9c" stroke="#8e8e8e" stroke-width="2"/><rect x="12" y="24.2" width="16" height="2.2" fill="#8e8e8e"/><rect x="14" y="26" width="12" height="2" fill="#858585"/><rect x="14" y="30" width="12" height="2" fill="#858585"/><rect x="14" y="34" width="12" height="2" fill="#858585"/></g>
<g transform="translate(1506.6,60)" ><path d="M1,1 H21.3 L31,10.2 V43 H1 Z" fill="#9c9c9c" stroke="#8a8a8a" stroke-width="2" stroke-linejoin="miter"/><path d="M21.3,1 V10.2 H31 Z" fill="#949494" stroke="#8a8a8a" stroke-width="2" stroke-linejoin="round"/></g>
<g transform="translate(1508.6,74)" ><defs><linearGradient id="p1508_74a" x1="0" y1="0" x2="0" y2="1"><stop offset="0.3" stop-color="#787e84"/><stop offset="1" stop-color="#80858a"/></linearGradient><linearGradient id="p1508_74b" x1="0" y1="0" x2="0" y2="1"><stop offset="0.35" stop-color="#85857f"/><stop offset="0.8" stop-color="#7d7b74"/></linearGradient></defs><rect x="0" y="0" width="28" height="22" fill="#72777c"/><rect x="2" y="2" width="24" height="18" fill="url(#p1508_74a)"/><path d="M2,10.459999999999999 L8.48,5.96 L26,13.16 V20 H2 Z" fill="url(#p1508_74b)"/></g>
<g transform="translate(1530,86)" ><rect x="0" y="0" width="22" height="22" rx="4.5" fill="#6d7174"/><path d="M11.5,8.5 V1.5 H17 Q20.5,1.5 20.5,5 V8.5 Z" fill="#7c8083"/><path d="M9.6,5.4 H6.3 Q4.3,5.4 4.3,7.4 V14.2 Q4.3,16.2 6.3,16.2 H9.6" fill="none" stroke="#9a9a9a" stroke-width="3.3" stroke-linecap="butt" stroke-linejoin="round"/><path d="M7,10.7 H18.5" stroke="#9a9a9a" stroke-width="2.3" fill="none"/><path d="M15.2,6.2 L19.3,10.7 L15.2,15.3" stroke="#9a9a9a" stroke-width="2.1" fill="none"/></g>
<path d="M1569.0,82.0 h8 l-4.0,7 z" fill="#9a9a9a"/>
<g transform="translate(1596,62) scale(0.8695652173913043,0.9142857142857143)"><rect x="1" y="1" width="44" height="33" rx="7" fill="#bcd1ec" stroke="#8aaad6" stroke-width="2"/><g fill="#4a6c94"><path d="M3.5,6.5 L8,5 L13.5,5.5 L12.5,8.5 L9,9 L7.5,11 L10,11.5 L8.5,14.5 L11,18 L9.5,18 L6,13 L4.5,9.5 Z"/><path d="M9.5,18.5 L12.5,18 L15.5,21.5 L14.5,24.5 L12.5,27 L11.8,31 L10.5,30 L10.5,25 L9,22 Z"/><path d="M16,3.5 H19.5 L17,6.5 Z"/><path d="M22,9 L23,6.5 L26,5.5 L29,6 V9.5 L25,9 Z"/><path d="M19.5,12 L23,10.5 L27.5,11.5 L29,14.5 L28,18 L26.2,20.5 L26,24 L24,24 L23,19 L19.5,18 L18.5,15 Z"/><path d="M30,5 L34,4.5 L42,6 L41.5,8.5 L39,9 L39.5,12 L37.5,13.5 L37,17 L35.5,15 L34,13.5 L32.5,15.5 L30.5,12.5 Z"/><path d="M37.5,26.5 L40,25.2 L43.2,25.5 L43,28 L40.5,28.5 L39,27.6 Z"/><path d="M23.3,25.8 L25.2,25.5 L24.2,28 Z"/><path d="M36,20 L37,19.5 L37.5,21 Z M38.5,19.6 L39.5,19.4 L39.3,21 Z"/></g><g fill="#e9eff9"><rect x="15" y="2" width="2" height="31"/><rect x="29" y="2" width="2" height="31"/><rect x="2" y="10" width="42" height="2"/><rect x="2" y="24" width="42" height="2"/></g></g>
<g transform="translate(1618.9,75.8) rotate(-37) scale(1.12)"><path d="M-3.8,6 V30 Q-3.8,33 0,33 Q3.8,33 3.8,30 V6 Z" fill="#ecd97c" stroke="#2e2e2e" stroke-width="1.4"/><rect x="-3.8" y="10.6" width="7.6" height="2.6" fill="#2e2e2e"/><circle cx="0" cy="28.8" r="1.9" fill="#6e6e6e" stroke="#2e2e2e" stroke-width="1"/><path transform="rotate(-15)" d="M4.0,-7.1 A8.1,8.1 0 1 1 -4.0,-7.1 L-3.6,-1.2 A3.6,3.6 0 0 0 3.6,-1.2 Z" fill="#eef0f0" stroke="#2e2e2e" stroke-width="1.4" stroke-linejoin="round"/></g>
<defs>
<radialGradient id="lens" cx="0.35" cy="0.3" r="0.75"><stop offset="0" stop-color="#f4f4f4"/><stop offset="0.55" stop-color="#d6d6d6"/><stop offset="1" stop-color="#c4c4c4"/></radialGradient>
<linearGradient id="rfA" x1="0" y1="0" x2="1" y2="0"><stop offset="0" stop-color="#7eaadc"/><stop offset="0.35" stop-color="#97bbe4"/><stop offset="0.7" stop-color="#5a92d0"/><stop offset="1" stop-color="#4682c6"/></linearGradient>
<linearGradient id="rfB" x1="0" y1="0" x2="1" y2="0"><stop offset="0" stop-color="#3a70b2"/><stop offset="0.5" stop-color="#4680c4"/><stop offset="1" stop-color="#78a4d6"/></linearGradient>
</defs>
<rect x="3.8" y="152.5" width="2.4" height="18.5" rx="1.2" fill="#a9a9a9"/>
<g transform="translate(45,156.8)"><g transform="rotate(46.5)"><rect x="-3.6" y="14" width="7.2" height="24.2" fill="#505050"/><circle cx="0" cy="19" r="2.2" fill="#000"/><rect x="-1.6" y="22.8" width="3.2" height="13.8" fill="#fdd32a"/><rect x="-1.6" y="22.8" width="1.1" height="13.8" fill="#ffe98a"/></g><circle r="16" fill="url(#lens)" stroke="#5c5c5c" stroke-width="1.8"/><path d="M-11.5,-1 A12,12 0 0 1 2,-12.5 A14,14 0 0 0 -9,3.5 Z" fill="#fff" opacity="0.55"/><path d="M-2.85,-8.9 A2.85,2.85 0 0 1 2.85,-8.9 V-2.95 H8.9 A2.95,2.95 0 0 1 8.9,2.95 H2.85 V8.9 A2.85,2.85 0 0 1 -2.85,8.9 V2.95 H-8.9 A2.95,2.95 0 0 1 -8.9,-2.95 H-2.85 Z" fill="#6f9bcb" stroke="#2f4d70" stroke-width="1.1"/></g>
<g transform="translate(113,156.8)"><g transform="rotate(46.5)"><rect x="-3.6" y="14" width="7.2" height="24.2" fill="#505050"/><circle cx="0" cy="19" r="2.2" fill="#000"/><rect x="-1.6" y="22.8" width="3.2" height="13.8" fill="#fdd32a"/><rect x="-1.6" y="22.8" width="1.1" height="13.8" fill="#ffe98a"/></g><circle r="16" fill="url(#lens)" stroke="#5c5c5c" stroke-width="1.8"/><path d="M-11.5,-1 A12,12 0 0 1 2,-12.5 A14,14 0 0 0 -9,3.5 Z" fill="#fff" opacity="0.55"/><rect x="-11.5" y="-2.95" width="23" height="5.9" rx="2.95" fill="#6f9bcb" stroke="#2f4d70" stroke-width="1.1"/></g>
<g transform="translate(181,156.8)"><rect x="-24" y="-13.5" width="24" height="25.5" fill="#eeeeec" stroke="#8a8c8a" stroke-width="2"/><g transform="rotate(46.5)"><rect x="-3.6" y="14" width="7.2" height="24.2" fill="#505050"/><circle cx="0" cy="19" r="2.2" fill="#000"/><rect x="-1.6" y="22.8" width="3.2" height="13.8" fill="#fdd32a"/><rect x="-1.6" y="22.8" width="1.1" height="13.8" fill="#ffe98a"/></g><circle r="16" fill="url(#lens)" stroke="#5c5c5c" stroke-width="1.8"/><path d="M-11.5,-1 A12,12 0 0 1 2,-12.5 A14,14 0 0 0 -9,3.5 Z" fill="#fff" opacity="0.55"/><clipPath id="c11"><rect x="-14" y="-12" width="28" height="15.9"/><rect x="-7.8" y="3.8" width="3.8" height="3.4"/><rect x="7.6" y="3.8" width="3.8" height="3.4"/><rect x="-2.2" y="3.8" width="4.4" height="3.4"/></clipPath><text clip-path="url(#c11)" y="6.8" font-size="21.5" font-weight="bold" fill="#2d3436" x="-12.7 -3.6 2.7">1:1</text></g>
<g transform="translate(248.8,157)"><g transform="rotate(46.5)"><rect x="-3.6" y="14" width="7.2" height="24.2" fill="#505050"/><circle cx="0" cy="19" r="2.2" fill="#000"/><rect x="-1.6" y="22.8" width="3.2" height="13.8" fill="#fdd32a"/><rect x="-1.6" y="22.8" width="1.1" height="13.8" fill="#ffe98a"/></g><circle r="16" fill="url(#lens)" stroke="#5c5c5c" stroke-width="1.8"/><path d="M-11.5,-1 A12,12 0 0 1 2,-12.5 A14,14 0 0 0 -9,3.5 Z" fill="#fff" opacity="0.55"/></g>
<path transform="translate(227.7,138.7) scale(1,1)" d="M0,0 H16 L11.5,5 L16,10.5 L10.8,15.5 L5.5,10.8 L0,15.5 Z" fill="#6f9bcb" stroke="#3d5f85" stroke-width="2" stroke-linejoin="miter"/>
<path transform="translate(267.1,138.7) scale(-1,1)" d="M0,0 H16 L11.5,5 L16,10.5 L10.8,15.5 L5.5,10.8 L0,15.5 Z" fill="#6f9bcb" stroke="#3d5f85" stroke-width="2" stroke-linejoin="miter"/>
<path transform="translate(267.1,178.2) scale(-1,-1)" d="M0,0 H16 L11.5,5 L16,10.5 L10.8,15.5 L5.5,10.8 L0,15.5 Z" fill="#6f9bcb" stroke="#3d5f85" stroke-width="2" stroke-linejoin="miter"/>
<path d="M292,160.3 C291.5,150 297,140 309,140 C316,140 321.5,143 326,146.7 L331.8,141.2 V160.8 H315 L322.6,154.6 C318,151 313,148.6 307,148.4 C302.5,148.3 300.5,151.5 300.5,157.5 C297,156.5 294,158 292,160.3 Z" fill="url(#rfA)" stroke="#3a72b8" stroke-width="1.3" stroke-linejoin="round"/>
<path d="M292,160.3 C291.5,150 297,140 309,140 C316,140 321.5,143 326,146.7 L331.8,141.2 V160.8 H315 L322.6,154.6 C318,151 313,148.6 307,148.4 C302.5,148.3 300.5,151.5 300.5,157.5 C297,156.5 294,158 292,160.3 Z" transform="rotate(180 312.1 162)" fill="url(#rfB)" stroke="#3a72b8" stroke-width="1.3" stroke-linejoin="round"/>
<path d="M317.5,159.6 H330.6 V144.5" fill="none" stroke="#b9d3ee" stroke-width="1"/><path d="M306.7,164.4 H293.6 V179.5" fill="none" stroke="#b9d3ee" stroke-width="1"/>
<path d="M323.5,165 C325,169 323.5,172.5 321,174 C325,173 327.5,170.5 328.5,168.5 Z" fill="#d8d8d8"/>
<rect x="359.8" y="152.5" width="2.4" height="18.5" rx="1.2" fill="#a9a9a9"/>
<rect x="377.3" y="145.2" width="23.7" height="21.8" fill="#c9e6fa" stroke="#4e7390" stroke-width="2"/>
<path d="M394,165 V157 Q394,149.5 401.5,149.5 H404.7 Q412.2,149.5 412.2,157 V165" fill="none" stroke="#8a8880" stroke-width="4.6"/><path d="M394,165 V157 Q394,149.5 401.5,149.5 H404.7 Q412.2,149.5 412.2,157 V165" fill="none" stroke="#fbfbfb" stroke-width="2.2"/>
<rect x="389" y="165" width="28" height="18" rx="2.5" fill="#f0dc22" stroke="#d4a800" stroke-width="2"/>
<rect x="445.2" y="151" width="20" height="21.9" fill="#c9e6fa" stroke="#4e7390" stroke-width="2"/>
<circle cx="468.9" cy="153.8" r="11.5" fill="#c9e6fa" stroke="#4e7390" stroke-width="2"/>
<path d="M481.2,165 V158.5 Q481.2,149.5 474,150 Q468.5,150.5 463.8,155.3" fill="none" stroke="#8a8880" stroke-width="4.6"/><path d="M481.2,165 V158.5 Q481.2,149.5 474,150 Q468.5,150.5 463.8,155.3" fill="none" stroke="#fbfbfb" stroke-width="2.2"/>
<rect x="457" y="165" width="28" height="18" rx="2.5" fill="#f0dc22" stroke="#d4a800" stroke-width="2"/>
<rect x="517.5" y="159.5" width="22.7" height="16.5" fill="#c9e6fa" stroke="#4e7390" stroke-width="2"/>
<circle cx="537" cy="156.8" r="11.3" fill="#c9e6fa" stroke="#4e7390" stroke-width="2"/>
<rect x="511.69999999999993" y="141.9" width="4.2" height="4.2" fill="#000"/>
<rect x="547.9" y="141.9" width="4.2" height="4.2" fill="#000"/>
<rect x="511.69999999999993" y="177.9" width="4.2" height="4.2" fill="#000"/>
<rect x="547.9" y="177.9" width="4.2" height="4.2" fill="#000"/>
<rect x="585" y="159.5" width="23.7" height="16.5" fill="#f3ef9d" stroke="#999" stroke-width="2"/>
<circle cx="604.6" cy="156.8" r="11.3" fill="#c9e6fa" stroke="#4e7390" stroke-width="2"/>
<rect x="589.9" y="141.9" width="4.2" height="4.2" fill="#000"/>
<rect x="615.9" y="141.9" width="4.2" height="4.2" fill="#000"/>
<rect x="579.6999999999999" y="153.9" width="4.2" height="4.2" fill="#000"/>
<rect x="615.9" y="167.9" width="4.2" height="4.2" fill="#000"/>
<rect x="589.9" y="167.9" width="4.2" height="4.2" fill="#000"/>
<rect x="579.6999999999999" y="177.9" width="4.2" height="4.2" fill="#000"/>
<rect x="609.6999999999999" y="177.9" width="4.2" height="4.2" fill="#000"/>
<rect x="649.5" y="159.5" width="29" height="21" fill="#c9e6fa" stroke="#7d9cb6" stroke-width="2"/>
<rect x="657.5" y="143.4" width="29.2" height="21.1" fill="#f3ef9d" stroke="#999" stroke-width="2"/>
<path d="M688.8,177.5 h8 l-4.0,7 z" fill="#b0b0b0"/>
<rect x="718" y="143.4" width="18.7" height="15.2" fill="#c8f7c8" stroke="#8fc08f" stroke-width="2"/>
<rect x="718" y="163.4" width="26.8" height="17.2" fill="#c9e6fa" stroke="#7d9cb6" stroke-width="2"/>
<rect x="716" y="140" width="2" height="43.5" fill="#444"/>
<path d="M756.8,177.5 h8 l-4.0,7 z" fill="#b0b0b0"/>
<rect x="783" y="153.2" width="8" height="19.8" fill="#c8f7c8" stroke="#8fc08f" stroke-width="2"/>
<rect x="801" y="153.2" width="11.8" height="27.4" fill="#c9e6fa" stroke="#7d9cb6" stroke-width="2"/>
<rect x="819" y="153.2" width="8" height="15.8" fill="#c8f7c8" stroke="#8fc08f" stroke-width="2"/>
<rect x="782" y="142" width="2" height="16" fill="#3a3a3a"/>
<rect x="800" y="142" width="2" height="16" fill="#3a3a3a"/>
<rect x="818" y="142" width="2" height="16" fill="#3a3a3a"/>
<path d="M825.0,177.5 h8 l-4.0,7 z" fill="#b0b0b0"/>
<rect x="853" y="143.2" width="21.8" height="37.4" fill="#c9e6fa" stroke="#7d9cb6" stroke-width="2"/>
<rect x="881.3" y="143.2" width="9.7" height="37.4" fill="#f3ef9d" stroke="#999" stroke-width="2"/>
<path d="M852,162 H860.5 M856.3,157.8 L860.8,162 L856.3,166.2 M876,162 H867.5 M871.7,157.8 L867.2,162 L871.7,166.2" fill="none" stroke="#3a3a3a" stroke-width="1.6"/>
<path d="M893.0,177.5 h8 l-4.0,7 z" fill="#b0b0b0"/>
<rect x="25" y="210.3" width="18" height="2" rx="1" fill="#a9a9a9"/>
<path d="M17.8,238.5 C17.5,236 19.5,235 21.1,235 C23,235 24.3,236 24.8,237.5 L27.4,244.3 V225 A3.1,3.1 0 0 1 33.6,225 V228.3 A3.3,3.3 0 0 1 40.2,228.3 V232.2 A3.1,3.1 0 0 1 46.4,232.2 V237 A2.7,2.7 0 0 1 51.8,237 V248 L47.5,266.5 H31 L29.6,262.2 L21.5,250.4 Z" transform="translate(-2,2)" fill="#b4b4b4" stroke="#b4b4b4" stroke-width="1.8" stroke-linejoin="round"/>
<path d="M17.8,238.5 C17.5,236 19.5,235 21.1,235 C23,235 24.3,236 24.8,237.5 L27.4,244.3 V225 A3.1,3.1 0 0 1 33.6,225 V228.3 A3.3,3.3 0 0 1 40.2,228.3 V232.2 A3.1,3.1 0 0 1 46.4,232.2 V237 A2.7,2.7 0 0 1 51.8,237 V248 L47.5,266.5 H31 L29.6,262.2 L21.5,250.4 Z" fill="#fff" stroke="#000" stroke-width="1.9" stroke-linejoin="round"/>
<path d="M33.6,226 V239.3 M40.2,230 V238.8 M46.4,234 V240.6" stroke="#000" stroke-width="1.9" stroke-linecap="round" fill="none"/>
<path d="M12.8,319.2 V293.3 H32" fill="none" stroke="#000" stroke-width="2.6" stroke-dasharray="4.2,3.8" stroke-dashoffset="2"/><path d="M12.8,319.2 H28" fill="none" stroke="#000" stroke-width="2.6" stroke-dasharray="4.2,3.8" stroke-dashoffset="2"/>
<g transform="translate(40.4,307.6) scale(1.05)">
<g transform="translate(0,0)"><g transform="rotate(46.5)"><rect x="-3.6" y="14" width="7.2" height="24.2" fill="#505050"/><circle cx="0" cy="19" r="2.2" fill="#000"/><rect x="-1.6" y="22.8" width="3.2" height="13.8" fill="#fdd32a"/><rect x="-1.6" y="22.8" width="1.1" height="13.8" fill="#ffe98a"/></g><circle r="16" fill="url(#lens)" stroke="#5c5c5c" stroke-width="1.8"/><path d="M-11.5,-1 A12,12 0 0 1 2,-12.5 A14,14 0 0 0 -9,3.5 Z" fill="#fff" opacity="0.55"/><path d="M6.9,-12 V10.2 H-8" fill="none" stroke="#bdbdbd" stroke-width="1.6" stroke-dasharray="3.6,4.2" stroke-dashoffset="-2"/></g>
</g>
<rect x="3" y="351" width="64" height="64" rx="6.5" fill="none" stroke="#fff" stroke-width="2.3"/>
<rect x="15.9" y="363.9" width="4.2" height="4.2" fill="#e8e8e8"/>
<rect x="44.0" y="363.9" width="4.2" height="4.2" fill="#e8e8e8"/>
<rect x="15.9" y="391.9" width="4.2" height="4.2" fill="#e8e8e8"/>
<rect x="44.0" y="391.9" width="4.2" height="4.2" fill="#e8e8e8"/>
<path d="M20.9,363 L25.6,398 L33.7,391.3 L41.4,404.8 L47.2,401.6 L38.8,388.8 L49,387.2 Z" fill="#fff" stroke="#000" stroke-width="2.1" stroke-linejoin="miter"/>
<defs><linearGradient id="scr" x1="0" y1="0" x2="1" y2="0"><stop offset="0" stop-color="#cfcfcf"/><stop offset="0.35" stop-color="#e6e6e6"/><stop offset="1" stop-color="#ececec"/></linearGradient></defs>
<g transform="translate(14,427)" ><rect x="10" y="3.3" width="29" height="38" fill="url(#scr)" stroke="#9a9a9a" stroke-width="2"/><g fill="#6f9bcb" stroke="#34577d" stroke-width="2" stroke-linejoin="miter"><path d="M26.2,6.5 L35.6,15.5 H29.5 V21.7 H22.6 V15.5 H16.8 Z"/><path d="M11,19.5 L13.2,19.5 V25.2 H19.3 V31.6 H13.2 V37.5 L11,36 Z"/><path d="M38,25.2 H32.6 V31.6 H38"/><path d="M22.6,40.3 V35.2 H29.5 V40.3"/></g><path d="M1,38 V5 Q1,1 5.5,1 Q10,1 10,5 V35" fill="#ececec" stroke="#9a9a9a" stroke-width="2"/><path d="M1,36 Q1,41.3 6,41.3 H14 Q10,39 10,35 Q8,32 5.5,32 Q1,32 1,36 Z" fill="#dcdcdc" stroke="#9a9a9a" stroke-width="1.6"/></g>
<path d="M27,499.8 L51,511.6 M27,499.8 L16.8,533.8" stroke="#000" stroke-width="2.2" fill="none"/>
<path d="M21.5,530.8 L30,525.2" stroke="#000" stroke-width="2" stroke-dasharray="1.8,2.2" fill="none"/>
<circle cx="27" cy="499.8" r="4.9" fill="#2a7fff" stroke="#1f66d0" stroke-width="0.6"/>
<circle cx="51" cy="511.6" r="4.9" fill="#2a7fff" stroke="#1f66d0" stroke-width="0.6"/>
<circle cx="16.8" cy="533.8" r="4.9" fill="#2a7fff" stroke="#1f66d0" stroke-width="0.6"/>
<path d="M38.5,522.5 L52,536.5" stroke="#b87a14" stroke-width="5.6"/>
<path d="M31.2,523.4 Q35,517 42.5,514.8 L43.5,516 Q38,520.5 34,526 Z" fill="#e2e2e2" stroke="#d0d0d0" stroke-width="1"/>
<path d="M30.5,518.5 L35,515" stroke="#b87a14" stroke-width="1.6"/>
<path d="M44,525.5 L53.8,514.3" stroke="#e8e8e8" stroke-width="1.3"/>
<path d="M31.8,537 L42,526.5" stroke="#d4aa00" stroke-width="6.2" stroke-linecap="round"/><path d="M32,536.6 L42,526.5" stroke="#fde94a" stroke-width="3.6" stroke-linecap="round"/>
<g transform="translate(14,563)" ><rect x="10" y="3.3" width="29" height="38" fill="url(#scr)" stroke="#9a9a9a" stroke-width="2"/><path d="M1,38 V5 Q1,1 5.5,1 Q10,1 10,5 V35" fill="#ececec" stroke="#9a9a9a" stroke-width="2"/><path d="M1,36 Q1,41.3 6,41.3 H14 Q10,39 10,35 Q8,32 5.5,32 Q1,32 1,36 Z" fill="#dcdcdc" stroke="#9a9a9a" stroke-width="1.6"/></g>
<g transform="translate(40.2,592) scale(0.9722222222222222)"><rect x="0" y="0" width="18" height="18" rx="3.5" fill="#5a9258"/><path d="M1.2,9 V4 Q1.2,1.2 4,1.2 H14 Q16.8,1.2 16.8,4 V9 Z" fill="#82ad7f"/><path d="M9,3.2 V14.8 M3.2,9 H14.8" stroke="#fff" stroke-width="3.2" stroke-linecap="round"/></g>
<path d="M29.1,638 L53.2,639.2 L53.7,662 L48,668 L38,667.5 L11.1,661.4 L18.7,643 Z" fill="#e4e4e4" stroke="#a6a6a6" stroke-width="2" stroke-linejoin="round"/>
<path d="M33.5,639 Q28,648 19,660 M44,640 Q36,650 30.5,664 M20.5,644 Q27,645 30,644.5 Q34,649 36,649.5 Q44,648 50,647 M17.5,653 Q25,653 30,655 Q38,655 46,652.5 Q50,648 52,645 M46,652.5 Q41,657 40,667 M46,653 L52.5,659" fill="none" stroke="#9c9c9c" stroke-width="1"/>
<g transform="translate(40.2,660.2) scale(0.9722222222222222)"><rect x="0" y="0" width="18" height="18" rx="3.5" fill="#5a9258"/><path d="M1.2,9 V4 Q1.2,1.2 4,1.2 H14 Q16.8,1.2 16.8,4 V9 Z" fill="#82ad7f"/><path d="M9,3.2 V14.8 M3.2,9 H14.8" stroke="#fff" stroke-width="3.2" stroke-linecap="round"/></g>
<g transform="translate(14,708)" ><defs><linearGradient id="p14_708a" x1="0" y1="0" x2="0" y2="1"><stop offset="0.3" stop-color="#49a7f0"/><stop offset="1" stop-color="#86c9f8"/></linearGradient><linearGradient id="p14_708b" x1="0" y1="0" x2="0" y2="1"><stop offset="0.35" stop-color="#dccf80"/><stop offset="0.8" stop-color="#ad9735"/></linearGradient></defs><rect x="0" y="0" width="40" height="28" fill="#9a9a9a"/><rect x="2" y="2" width="36" height="24" fill="url(#p14_708a)"/><path d="M2,13.28 L11.72,7.28 L38,16.88 V26 H2 Z" fill="url(#p14_708b)"/></g>
<g transform="translate(40.2,728.2) scale(0.9722222222222222)"><rect x="0" y="0" width="18" height="18" rx="3.5" fill="#5a9258"/><path d="M1.2,9 V4 Q1.2,1.2 4,1.2 H14 Q16.8,1.2 16.8,4 V9 Z" fill="#82ad7f"/><path d="M9,3.2 V14.8 M3.2,9 H14.8" stroke="#fff" stroke-width="3.2" stroke-linecap="round"/></g>
<rect x="15" y="776.8" width="38" height="26" fill="#f0f0f0" stroke="#9a9a9a" stroke-width="2"/>
<text x="34" y="798" text-anchor="middle" font-family="Liberation Serif, serif" font-size="25" fill="#2e2e2e">T</text>
<g transform="translate(40.2,796.2) scale(0.9722222222222222)"><rect x="0" y="0" width="18" height="18" rx="3.5" fill="#5a9258"/><path d="M1.2,9 V4 Q1.2,1.2 4,1.2 H14 Q16.8,1.2 16.8,4 V9 Z" fill="#82ad7f"/><path d="M9,3.2 V14.8 M3.2,9 H14.8" stroke="#fff" stroke-width="3.2" stroke-linecap="round"/></g>
<rect x="17" y="841" width="8.4" height="8.4" fill="#ffd21e" stroke="#ff9a00" stroke-width="2"/>
<rect x="17" y="853" width="8.4" height="8.4" fill="#ff4a0a" stroke="#c93400" stroke-width="2"/>
<rect x="17" y="865" width="8.4" height="8.4" fill="#0cbe62" stroke="#006a42" stroke-width="2"/>
<rect x="28" y="846" width="12" height="4" fill="#9b9b9b"/><rect x="28" y="858" width="18" height="4" fill="#9b9b9b"/><rect x="28" y="870" width="8" height="4" fill="#9b9b9b"/>
<g transform="translate(40.2,864.2) scale(0.9722222222222222)"><rect x="0" y="0" width="18" height="18" rx="3.5" fill="#5a9258"/><path d="M1.2,9 V4 Q1.2,1.2 4,1.2 H14 Q16.8,1.2 16.8,4 V9 Z" fill="#82ad7f"/><path d="M9,3.2 V14.8 M3.2,9 H14.8" stroke="#fff" stroke-width="3.2" stroke-linecap="round"/></g>
<rect x="13" y="920.5" width="41.7" height="6.4" fill="#8a8a8a" stroke="#434343" stroke-width="2"/>
<rect x="14" y="921.5" width="8" height="4.4" fill="#adadad"/><rect x="30" y="921.5" width="8" height="4.4" fill="#adadad"/><rect x="46" y="921.5" width="7.7" height="4.4" fill="#adadad"/>
<g transform="translate(40.2,932) scale(0.9722222222222222)"><rect x="0" y="0" width="18" height="18" rx="3.5" fill="#5a9258"/><path d="M1.2,9 V4 Q1.2,1.2 4,1.2 H14 Q16.8,1.2 16.8,4 V9 Z" fill="#82ad7f"/><path d="M9,3.2 V14.8 M3.2,9 H14.8" stroke="#fff" stroke-width="3.2" stroke-linecap="round"/></g>
<path d="M33.8,975 L44.5,1008 L33.8,1001.5 L20,1013.5 Z" fill="#6f9bcb" stroke="#3d5f85" stroke-width="2" stroke-linejoin="round"/>
<text x="34.1" y="999.8" text-anchor="middle" font-size="15.5" font-weight="bold" fill="#fff">N</text>
<g transform="translate(38.2,998) scale(1.0833333333333333)"><rect x="0" y="0" width="18" height="18" rx="3.5" fill="#5a9258"/><path d="M1.2,9 V4 Q1.2,1.2 4,1.2 H14 Q16.8,1.2 16.8,4 V9 Z" fill="#82ad7f"/><path d="M9,3.2 V14.8 M3.2,9 H14.8" stroke="#fff" stroke-width="3.2" stroke-linecap="round"/></g>
<rect x="15" y="1059" width="28" height="19.7" fill="#c9e6fa" stroke="#8aa8c8" stroke-width="2"/>
<circle cx="41.6" cy="1062.6" r="11" fill="#fbb7b7" stroke="#d46a6a" stroke-width="2"/>
<path d="M31,1042.5 L44,1064 H19.2 Z" fill="#c8f7c8" stroke="#6aa86a" stroke-width="2" stroke-linejoin="round"/>
<g transform="translate(40.2,1068.2) scale(0.9722222222222222)"><rect x="0" y="0" width="18" height="18" rx="3.5" fill="#5a9258"/><path d="M1.2,9 V4 Q1.2,1.2 4,1.2 H14 Q16.8,1.2 16.8,4 V9 Z" fill="#82ad7f"/><path d="M9,3.2 V14.8 M3.2,9 H14.8" stroke="#fff" stroke-width="3.2" stroke-linecap="round"/></g>
<path d="M55.25,1077.5 h7.5 l-3.75,7 z" fill="#a6a6a6"/>
<path d="M34.2,1110.8 L39.7,1124.8 L54.6,1125.7 L43.0,1135.2 L46.8,1149.7 L34.2,1141.6 L21.6,1149.7 L25.4,1135.2 L13.8,1125.7 L28.7,1124.8 Z" fill="#fceeb0" stroke="#e2a262" stroke-width="2" stroke-linejoin="round"/>
<g transform="translate(40.2,1136.4) scale(0.9722222222222222)"><rect x="0" y="0" width="18" height="18" rx="3.5" fill="#5a9258"/><path d="M1.2,9 V4 Q1.2,1.2 4,1.2 H14 Q16.8,1.2 16.8,4 V9 Z" fill="#82ad7f"/><path d="M9,3.2 V14.8 M3.2,9 H14.8" stroke="#fff" stroke-width="3.2" stroke-linecap="round"/></g>
<path d="M30,1199 L33.5,1202 L37,1199 M30,1204 L33.5,1207 L37,1204" fill="none" stroke="#2e2e2e" stroke-width="1.2"/>
<g transform="translate(1799.5,207.5)" ><rect x="1" y="1" width="19.5" height="19.5" rx="4.5" fill="#787878" stroke="#353535" stroke-width="2"/><path d="M5.2,5.2 L16.3,16.3 M16.3,5.2 L5.2,16.3" stroke="#353535" stroke-width="3.2" stroke-linecap="round"/></g>
<g transform="translate(1799.5,631.5)" ><rect x="1" y="1" width="19.5" height="19.5" rx="4.5" fill="#787878" stroke="#353535" stroke-width="2"/><path d="M5.2,5.2 L16.3,16.3 M16.3,5.2 L5.2,16.3" stroke="#353535" stroke-width="3.2" stroke-linecap="round"/></g>
<path d="M1141.5,256 Q1152,250.5 1163,252.5 Q1167.5,253.5 1170,256.5" fill="none" stroke="#8c8c8c" stroke-width="1.2"/>
<path d="M1142.3,263 Q1149,256 1157,256.5 Q1165,257.5 1171,265.5 Q1163,272.3 1155,272 Q1148,271.5 1142.3,263 Z" fill="#f4f4f4" stroke="#8f8f8f" stroke-width="0.8"/>
<defs><radialGradient id="iris" cx="0.5" cy="0.45" r="0.5"><stop offset="0.35" stop-color="#6c6c6c"/><stop offset="0.75" stop-color="#b9b9b9"/><stop offset="1" stop-color="#d8d8d8"/></radialGradient></defs>
<circle cx="1155.7" cy="262.6" r="7" fill="url(#iris)" stroke="#555" stroke-width="1"/>
<circle cx="1155.9" cy="261.6" r="3.1" fill="#000"/><circle cx="1154.8" cy="260.4" r="0.9" fill="#fff"/>
<path d="M1204.8,262.5 V257 Q1204.8,250.8 1212.1,250.8 Q1219.4,250.8 1219.4,257 V262.5" fill="none" stroke="#9a9a96" stroke-width="3.6"/><path d="M1204.8,262.5 V257 Q1204.8,250.8 1212.1,250.8 Q1219.4,250.8 1219.4,257 V262.5" fill="none" stroke="#fbfbfb" stroke-width="2"/>
<rect x="1200" y="262.3" width="23.8" height="15.4" rx="3" fill="#696969"/>
<g transform="translate(1744,760)" ><path d="M0,4.3 L-8.5,15 L0,25.6 Z" fill="#97999c" stroke="#54575a" stroke-width="2" stroke-linejoin="round"/><rect x="0.9" y="0.9" width="24.2" height="30.2" fill="#d9d9d9" stroke="#868880" stroke-width="1.8"/><rect x="0.9" y="14.2" width="24.2" height="1.7" fill="#868880"/><rect x="5" y="6.3" width="16.3" height="3.6" rx="1.8" fill="#55585a"/><rect x="6" y="22.1" width="14.3" height="1.9" rx="0.9" fill="#4a4d4f"/></g>
<path d="M1775.3,783.6 h7.8 l-3.9,7.2 z" fill="#b2b2b2"/>
<g transform="translate(1744,824)" ><path d="M0,4.3 L-8.5,15 L0,25.6 Z" fill="#97999c" stroke="#54575a" stroke-width="2" stroke-linejoin="round"/><rect x="0.9" y="0.9" width="24.2" height="30.2" fill="#d9d9d9" stroke="#868880" stroke-width="1.8"/><rect x="0.9" y="14.2" width="24.2" height="1.7" fill="#868880"/><rect x="5" y="6.3" width="16.3" height="3.6" rx="1.8" fill="#55585a"/><rect x="6" y="22.1" width="14.3" height="1.9" rx="0.9" fill="#4a4d4f"/></g>
<path d="M1775.3,847.6 h7.8 l-3.9,7.2 z" fill="#b2b2b2"/>
<g transform="translate(1541.7,888)" ><path d="M0,4.3 L-8.5,15 L0,25.6 Z" fill="#97999c" stroke="#54575a" stroke-width="2" stroke-linejoin="round"/><rect x="0.9" y="0.9" width="24.2" height="30.2" fill="#d9d9d9" stroke="#868880" stroke-width="1.8"/><rect x="0.9" y="14.2" width="24.2" height="1.7" fill="#868880"/><rect x="5" y="6.3" width="16.3" height="3.6" rx="1.8" fill="#55585a"/><rect x="6" y="22.1" width="14.3" height="1.9" rx="0.9" fill="#4a4d4f"/></g>
<path d="M1573.0,911.6 h7.8 l-3.9,7.2 z" fill="#b2b2b2"/>
<g transform="translate(1541.7,952)" ><path d="M0,4.3 L-8.5,15 L0,25.6 Z" fill="#97999c" stroke="#54575a" stroke-width="2" stroke-linejoin="round"/><rect x="0.9" y="0.9" width="24.2" height="30.2" fill="#d9d9d9" stroke="#868880" stroke-width="1.8"/><rect x="0.9" y="14.2" width="24.2" height="1.7" fill="#868880"/><rect x="5" y="6.3" width="16.3" height="3.6" rx="1.8" fill="#55585a"/><rect x="6" y="22.1" width="14.3" height="1.9" rx="0.9" fill="#4a4d4f"/></g>
<path d="M1573.0,975.6 h7.8 l-3.9,7.2 z" fill="#b2b2b2"/>
<g transform="translate(1548,1036.3)" ><path d="M0,4.3 L-8.5,15 L0,25.6 Z" fill="#97999c" stroke="#54575a" stroke-width="2" stroke-linejoin="round"/><rect x="0.9" y="0.9" width="24.2" height="30.2" fill="#d9d9d9" stroke="#868880" stroke-width="1.8"/><rect x="0.9" y="14.2" width="24.2" height="1.7" fill="#868880"/><rect x="5" y="6.3" width="16.3" height="3.6" rx="1.8" fill="#55585a"/><rect x="6" y="22.1" width="14.3" height="1.9" rx="0.9" fill="#4a4d4f"/></g>
<path d="M1579.3,1059.9 h7.8 l-3.9,7.2 z" fill="#b2b2b2"/>
<path d="M1696.8,773.6 h8 l-4.0,7.6 z" fill="#c2c2c2"/>
<path d="M1696.8,837.6 h8 l-4.0,7.6 z" fill="#c2c2c2"/>
<path d="M1768.8,933.25 h8 l-4.0,7.5 z" fill="#a6a6a6"/>
<path d="M1788.8,1109.6999999999998 h8 l-4.0,7.8 z" fill="#bdbdbd"/>
<path d="M1574.25,1244.5 h9.5 l-4.75,9 z" fill="#c6c6c6"/>
<path d="M1494.75,896.9 h8.5 l-4.25,-7.8 z" fill="#c4c4c4"/>
<path d="M1494.75,911.1 h8.5 l-4.25,7.8 z" fill="#c4c4c4"/>
<path d="M1494.75,960.9 h8.5 l-4.25,-7.8 z" fill="#c4c4c4"/>
<path d="M1494.75,975.1 h8.5 l-4.25,7.8 z" fill="#c4c4c4"/>
<path d="M1612,896.3 H1626.6 V912 M1626.6,960 V974.7 H1612" fill="none" stroke="#7c7c7c" stroke-width="2.8"/>
<path d="M1621,929 Q1623,923.2 1629,923.6 Q1635.5,924.5 1635,936" fill="none" stroke="#858585" stroke-width="2.2"/>
<rect x="1614.6" y="936.4" width="23.4" height="15" rx="3" fill="#6b6b6b"/></svg>
</body></html>
